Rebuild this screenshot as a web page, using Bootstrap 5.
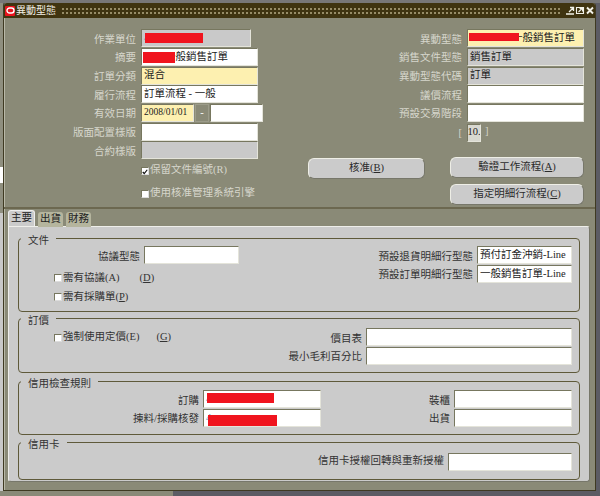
<!DOCTYPE html>
<html lang="en">
<head>
    <meta charset="UTF-8">
    <meta name="viewport" content="width=device-width, initial-scale=1.0">
    <title>異動型態</title>
    <link href="https://cdn.jsdelivr.net/npm/bootstrap@5.3.0/dist/css/bootstrap.min.css" rel="stylesheet">
    <style>
        html, body { height: 100%; }
        body {
            margin: 0;
            width: 600px;
            height: 496px;
            overflow: hidden;
            font-family: "Liberation Serif", "Noto Sans CJK TC", serif;
            font-size: 10.5px;
            line-height: 1;
            /* what shows of the desktop behind the window */
            background:
                linear-gradient(#777, #777) 0 0 / 600px 3px no-repeat,
                linear-gradient(#8a8a78, #8a8a78) 0 491px / 173px 5px no-repeat,
                linear-gradient(to bottom, #8f8f7f 0, #8f8f7f 167px, #fff 167px, #fff 183px, #8f8f7f 183px, #8f8f7f 213px, #c9c9c9 213px, #c9c9c9 491px) 0 0 / 3px 491px no-repeat,
                #5c5c64;
        }
        .desk { padding: 3px 4px 5px 3px; height: 496px; }

        /* window frame and title */
        .ora-window {
            height: 488px;
            background: #8a8a77;
            border: 1px solid #3f3a22;
            border-top: 0;
            border-radius: 3px 3px 0 0;
            box-shadow: inset 1px 0 0 #b9b9a8;
        }
        .ora-title {
            height: 15px;
            background: #3f3410;
            color: #f2f2e8;
            font-size: 10px;
            padding: 0 1px 0 1px;
            border-radius: 3px 3px 0 0;
        }
        .ora-logo {
            width: 10px;
            height: 10px;
            background: #e8121c;
            border-radius: 1px;
            flex: none;
            margin-right: 1px;
        }
        .ora-dots {
            flex: 1;
            height: 8px;
            margin: 0 4px 0 5px;
            background-image: radial-gradient(circle at 2px 2px, #968c66 1.1px, transparent 1.4px);
            background-size: 4px 4px;
        }

        /* upper form */
        .form-top { padding: 11px 0 0 0; height: 191px; border-bottom: 2px solid #6c6850; }
        .form-col-left { width: 259px; flex: none; }
        .form-col-right { width: 330px; flex: none; }
        .line { height: 18.67px; }
        .lbl { color: #d6d6cc; text-align: right; white-space: nowrap; padding: 3px 5px 0 0; }
        .form-col-left .lbl { width: 137px; flex: none; }
        .form-col-right .lbl { width: 204px; flex: none; }
        .fld {
            height: 18px;
            background: #fff;
            border: 1px solid #e4e4da;
            border-top-color: #77775f;
            border-left-color: #77775f;
            color: #222;
            padding: 0 0 0 2px;
            display: flex;
            align-items: center;
            position: relative;
            white-space: nowrap;
            overflow: hidden;
        }
        .w117 { width: 117px; }
        .w110 { width: 110px; }
        .w54 { width: 54px; }
        .w14 { width: 14px; }
        .tone-req { background: #fdf0b0; }
        .tone-ro { background: #c9c9c9; }
        .date-txt { font-size: 9.5px; }
        .dash { justify-content: center; color: #fff; margin: 0 1px; border-color: #9c9c8a; padding: 0; background: #8a8a77; }
        .seq-fld { background: #d8d8d0; justify-content: center; padding: 0; margin-top: 2px; }

        /* red blocks over redacted values */
        .red-mark { position: absolute; background: #f0141e; }
        .rm-unit { left: 3px; top: 3px; width: 58px; height: 10px; }
        .rm-memo { left: 1px; top: 3px; width: 32px; height: 11px; }
        .rm-type { left: 1px; top: 3px; width: 50px; height: 8px; }
        .rm-order { left: 3px; top: 2px; width: 67px; height: 10px; }
        .rm-pick { left: 4px; top: 5px; width: 69px; height: 11px; }
        .fade-digit { color: #5f8fb0; }

        .chk-line { color: #d6d6cc; padding-left: 137px; height: 18px; white-space: nowrap; }
        .chk-first { margin-top: 2px; }
        .chk-second { margin-top: 5px; }
        .box {
            width: 8px;
            height: 8px;
            background: #fff;
            border: 1px solid #77775f;
            border-right-color: #ddd;
            border-bottom-color: #ddd;
            flex: none;
            margin-right: 1px;
            display: inline-flex;
        }
        .box svg { display: block; }
        .ora-btn {
            background: #cbcbcb;
            color: #2a2a2a;
            border: 1px solid #eeeee6;
            border-right-color: #77776a;
            border-bottom-color: #77776a;
            border-radius: 6px;
            height: 21px;
            font-size: 10.5px;
            line-height: 1;
            padding: 0;
            display: block;
        }
        .stack-btn { width: 134px; }
        .wide-btn { width: 117px; margin-top: 1px; }
        .seq { color: #d6d6cc; }
        .btn-zone { margin-top: 16px; padding-left: 45px; }
        .btn-single { width: 142px; flex: none; }
        .btn-stack { gap: 6px; }

        /* tabs */
        .tab-bar { padding: 2px 0 0 4px; height: 17px; gap: 3px; }
        .ora-tab {
            background: #b5b59e;
            color: #222;
            border-radius: 3px 3px 0 0;
            padding: 0 2px;
            height: 15px;
            margin-top: 1px;
            display: flex;
            align-items: center;
        }
        .ora-tab.on { background: #cbcbcb; border: 1px solid #eee; border-bottom: 0; height: 16px; margin-top: -1px; padding: 0 2px; width: 27px; }
        .tab-panel {
            margin: 0 5px 0 4px;
            height: 256px;
            background: #cbcbcb;
            border: 1px solid #eeeeea;
            border-right-color: #77776a;
            border-bottom-color: #77776a;
            border-radius: 0 3px 3px 3px;
            padding: 11px 9px 0 9px;
        }

        /* fieldset boxes */
        .grp {
            border: 1px solid #5f5a3a;
            border-radius: 4px;
            position: relative;
            color: #333;
        }
        .grp-title {
            position: absolute;
            top: -3px;
            left: 2px;
            background: #cbcbcb;
            padding: 0 7px;
            color: #333;
        }
        .grp .lbl { color: #333; padding-right: 4px; }
        .doc-box { height: 74px; padding-top: 7px; }
        .price-box { height: 55px; margin-top: 6px; padding-top: 9px; }
        .credit-box { height: 54px; margin-top: 8px; padding-top: 8px; }
        .card-box { height: 38px; margin-top: 7px; padding: 10px 7px 0 0; }
        .sub-left { width: 222px; flex: none; }
        .sub-left .lbl { width: 125px; flex: none; }
        .sub-right { flex: 1; padding-right: 7px; }
        .sub-right .lbl { flex: 1; }
        .w95 { width: 95px; }
        .w206 { width: 206px; }
        .w118 { width: 118px; }
        .w124 { width: 124px; }
        .g-chk { padding-left: 35px; height: 19px; }
        .chk-gap { margin-top: 4px; }
        .price-chk { width: 260px; flex: none; }
        .credit-left { width: 302px; flex: none; }
        .key-d { margin-left: 20px; }
        .key-g { margin-left: 17px; }
        .line-in { height: 18.5px; }
    </style>
</head>
<body>
<div class="desk">
    <div class="ora-window">
        <div class="ora-title d-flex align-items-center">
            <span class="ora-logo d-flex align-items-center justify-content-center">
                <svg width="9" height="7" viewBox="0 0 9 7"><rect x="1" y="1" width="7" height="5" rx="2.5" fill="none" stroke="#fff" stroke-width="1.4"/></svg>
            </span>
            <span>異動型態</span>
            <span class="ora-dots"></span>
            <svg width="28" height="9" viewBox="0 0 28 9">
                <path d="M0 8h8M3 6l4-4M4 1.500h3.500v3.500" fill="none" stroke="#f2f2e8" stroke-width="1.300"/>
                <path d="M10.500 1.500h7v6h-7zM12.500 6l3.500-3.500M13.500 2.500h3v3" fill="none" stroke="#f2f2e8" stroke-width="1.100"/>
                <path d="M21 1.500l6 6M27 1.500l-6 6" fill="none" stroke="#f2f2e8" stroke-width="1.900"/>
            </svg>
        </div>

        <div class="form-top d-flex">
            <div class="form-col-left">
                <div class="line d-flex align-items-center"><span class="lbl">作業單位</span><span class="fld w110 tone-ro"><span class="fade-digit">4</span><span class="red-mark rm-unit"></span></span></div>
                <div class="line d-flex align-items-center"><span class="lbl">摘要</span><span class="fld w117"><span class="red-mark rm-memo"></span><span class="invisible">異動</span>一般銷售訂單</span></div>
                <div class="line d-flex align-items-center"><span class="lbl">訂單分類</span><span class="fld w117 tone-req">混合</span></div>
                <div class="line d-flex align-items-center"><span class="lbl">履行流程</span><span class="fld w117">訂單流程 - 一般</span></div>
                <div class="line d-flex align-items-center"><span class="lbl">有效日期</span><span class="fld w54 tone-req date-txt">2008/01/01</span><span class="fld w14 dash">-</span><span class="fld w54"></span></div>
                <div class="line d-flex align-items-center"><span class="lbl">版面配置樣版</span><span class="fld w117"></span></div>
                <div class="line d-flex align-items-center"><span class="lbl">合約樣版</span><span class="fld w117 tone-ro"></span></div>
                <div class="chk-line chk-first d-flex align-items-center"><span class="box"><svg width="8" height="8" viewBox="0 0 8 8"><path d="M1 4l2 2 4-5" fill="none" stroke="#111" stroke-width="1.600"/></svg></span>保留文件編號(R)</div>
                <div class="chk-line chk-second d-flex align-items-center"><span class="box"></span>使用核准管理系統引擎</div>
            </div>
            <div class="form-col-right">
                <div class="line d-flex align-items-center"><span class="lbl">異動型態</span><span class="fld w117 tone-req"><span class="red-mark rm-type"></span><span class="invisible">異動型態</span>一般銷售訂單</span></div>
                <div class="line d-flex align-items-center"><span class="lbl">銷售文件型態</span><span class="fld w117 tone-ro">銷售訂單</span></div>
                <div class="line d-flex align-items-center"><span class="lbl">異動型態代碼</span><span class="fld w117 tone-ro">訂單</span></div>
                <div class="line d-flex align-items-center"><span class="lbl">議價流程</span><span class="fld w117"></span></div>
                <div class="line d-flex align-items-center"><span class="lbl">預設交易階段</span><span class="fld w117"></span></div>
                <div class="line d-flex align-items-center"><span class="lbl seq">[</span><span class="fld w14 seq-fld">10.</span><span class="seq ms-1">]</span></div>
                <div class="d-flex btn-zone">
                    <div class="btn-single"><button type="button" class="ora-btn wide-btn">核准(<u>B</u>)</button></div>
                    <div class="d-flex flex-column btn-stack">
                        <button type="button" class="ora-btn stack-btn">驗證工作流程(<u>A</u>)</button>
                        <button type="button" class="ora-btn stack-btn">指定明細行流程(<u>C</u>)</button>
                    </div>
                </div>
            </div>
        </div>

        <div class="tab-bar d-flex align-items-start">
            <div class="ora-tab on">主要</div>
            <div class="ora-tab">出貨</div>
            <div class="ora-tab">財務</div>
        </div>
        <div class="tab-panel">
            <div class="grp doc-box">
                <span class="grp-title">文件</span>
                <div class="d-flex">
                    <div class="sub-left">
                        <div class="line-in d-flex align-items-center"><span class="lbl">協議型態</span><span class="fld w95"></span></div>
                        <div class="g-chk chk-gap d-flex align-items-center"><span class="box"></span>需有協議(A)<span class="key-d">(<u>D</u>)</span></div>
                        <div class="g-chk d-flex align-items-center"><span class="box"></span>需有採購單(<u>P</u>)</div>
                    </div>
                    <div class="sub-right">
                        <div class="line-in d-flex align-items-center"><span class="lbl">預設退貨明細行型態</span><span class="fld w95">預付訂金沖銷-Line</span></div>
                        <div class="line-in d-flex align-items-center"><span class="lbl">預設訂單明細行型態</span><span class="fld w95">一般銷售訂單-Line</span></div>
                    </div>
                </div>
            </div>
            <div class="grp price-box">
                <span class="grp-title">訂價</span>
                <div class="d-flex">
                    <div class="g-chk price-chk d-flex align-items-center"><span class="box"></span>強制使用定價(E)<span class="key-g">(<u>G</u>)</span></div>
                    <div class="sub-right">
                        <div class="line-in d-flex align-items-center"><span class="lbl">價目表</span><span class="fld w206"></span></div>
                        <div class="line-in d-flex align-items-center"><span class="lbl">最小毛利百分比</span><span class="fld w206"></span></div>
                    </div>
                </div>
            </div>
            <div class="grp credit-box">
                <span class="grp-title">信用檢查規則</span>
                <div class="d-flex">
                    <div class="credit-left">
                        <div class="line-in d-flex align-items-center"><span class="lbl flex-grow-1">訂購</span><span class="fld w118"><span class="fade-digit">4</span><span class="red-mark rm-order"></span></span></div>
                        <div class="line-in d-flex align-items-center"><span class="lbl flex-grow-1">揀料/採購核發</span><span class="fld w118"><span class="fade-digit">4</span><span class="red-mark rm-pick"></span></span></div>
                    </div>
                    <div class="sub-right">
                        <div class="line-in d-flex align-items-center"><span class="lbl">裝櫃</span><span class="fld w118"></span></div>
                        <div class="line-in d-flex align-items-center"><span class="lbl">出貨</span><span class="fld w118"></span></div>
                    </div>
                </div>
            </div>
            <div class="grp card-box d-flex justify-content-end align-items-start">
                <span class="grp-title">信用卡</span>
                <span class="lbl">信用卡授權回轉與重新授權</span><span class="fld w124"></span>
            </div>
        </div>
    </div>
</div>
</body>
</html>
